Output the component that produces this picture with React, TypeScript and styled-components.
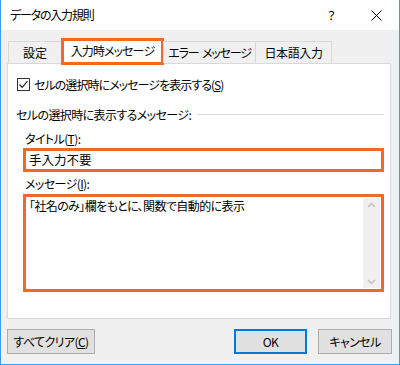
import React from "react";
import styled, { createGlobalStyle } from "styled-components";

const Global = createGlobalStyle`
  html, body { margin: 0; padding: 0; background: #ffffff; }
  body {
    font-family: "Noto Sans CJK JP", "Noto Sans", sans-serif;
    font-size: 12px;
    letter-spacing: -0.6px;
    color: #000;
    font-feature-settings: "palt";
  }
  * { box-sizing: border-box; }
`;

const Window = styled.div`
  width: 400px;
  height: 365px;
  border: 1px solid #3d9be9;
  border-top: none;
  background: #f0f0f0;
  display: flex;
  flex-direction: column;
`;

const TitleBar = styled.div`
  height: 30px;
  background: #ffffff;
  display: flex;
  align-items: center;
  padding-left: 9px;
  flex-shrink: 0;
`;

const TitleText = styled.div`
  flex: 1;
  font-size: 12px;
  letter-spacing: -1.2px;
  line-height: 1;
  padding-bottom: 1px;
`;

const TitleButton = styled.div`
  width: 45px;
  height: 30px;
  display: flex;
  align-items: center;
  justify-content: center;
  font-family: "Noto Sans", sans-serif;
  font-size: 13px;
  letter-spacing: 0;
  color: #000;
`;

const TabStrip = styled.div`
  display: flex;
  align-items: flex-end;
  height: 33px;
  padding-left: 7px;
  position: relative;
  z-index: 1;
`;

const Tab = styled.div<{ $w: number; $active?: boolean; $ls?: number }>`
  width: ${(p) => p.$w}px;
  height: ${(p) => (p.$active ? 27 : 22)}px;
  margin-left: -1px;
  margin-bottom: ${(p) => (p.$active ? -2 : 0)}px;
  display: flex;
  align-items: center;
  justify-content: center;
  background: ${(p) => (p.$active ? "#ffffff" : "#f0f0f0")};
  border: ${(p) => (p.$active ? "3px solid #ee6a2a" : "1px solid #d9d9d9")};
  border-bottom: ${(p) => (p.$active ? "3px solid #ee6a2a" : "none")};
  padding-bottom: ${(p) => (p.$active ? 2 : 1)}px;
  letter-spacing: ${(p) => (p.$ls !== undefined ? p.$ls : -0.6)}px;
  word-spacing: 2px;
  white-space: pre;
  &:first-child { margin-left: 0; }
`;

const Panel = styled.div`
  margin: 0 8px 0 6px;
  height: 256px;
  background: #ffffff;
  border: 1px solid #d9d9d9;
  display: flex;
  flex-direction: column;
  padding: 14px 6px 0 9px;
`;

const CheckRow = styled.div`
  display: flex;
  align-items: center;
  gap: 4px;
  height: 12px;
  letter-spacing: -0.95px;
`;

const CheckBox = styled.div`
  width: 13px;
  height: 13px;
  border: 1px solid #333333;
  background: #fff;
  display: flex;
  align-items: center;
  justify-content: center;
  flex-shrink: 0;
`;

const GroupRow = styled.div`
  display: flex;
  align-items: center;
  margin-top: 17px;
  margin-left: -1px;
  height: 14px;
`;

const GroupLine = styled.div`
  flex: 1;
  height: 1px;
  background: #dcdcdc;
  margin-left: 6px;
`;

const FieldLabel = styled.div<{ $mt: number }>`
  margin-top: ${(p) => p.$mt}px;
  margin-left: 8px;
  height: 14px;
  line-height: 14px;
`;

const InputBox = styled.div`
  margin-top: 2px;
  margin-left: 6px;
  height: 24px;
  width: 361px;
  border: 3px solid #ee6a2a;
  display: flex;
  align-items: center;
  padding-left: 3px;
  padding-bottom: 1px;
  font-size: 12.5px;
  letter-spacing: 0;
`;

const MessageBox = styled.div`
  margin-top: 3px;
  margin-left: 6px;
  height: 98px;
  width: 361px;
  border: 3px solid #ee6a2a;
  display: flex;
  padding: 1px;
`;

const MessageText = styled.div`
  flex: 1;
  padding: 0 0 0 2px;
  line-height: 16px;
  font-size: 12px;
  letter-spacing: -0.6px;
`;

const ScrollBar = styled.div`
  width: 17px;
  background: #f0f0f0;
  display: flex;
  flex-direction: column;
  justify-content: space-between;
  align-items: center;
  padding: 4px 0 3px;
`;

const Footer = styled.div`
  display: flex;
  align-items: center;
  margin-top: 10px;
  padding: 0 7px 0 6px;
`;

const Button = styled.div<{ $w: number; $primary?: boolean }>`
  width: ${(p) => p.$w}px;
  height: 25px;
  background: #e1e1e1;
  border: ${(p) => (p.$primary ? "2px solid #0078d7" : "1px solid #adadad")};
  display: flex;
  align-items: center;
  justify-content: center;
  padding-bottom: 1px;
  white-space: nowrap;
`;

const Spacer = styled.div`
  flex: 1;
`;

const ButtonGap = styled.div`
  width: 11px;
`;

const Chevron = ({ up }: { up?: boolean }) => (
  <svg width="9" height="6" viewBox="0 0 9 6">
    <path
      d={up ? "M1 5 L4.5 1.5 L8 5" : "M1 1 L4.5 4.5 L8 1"}
      fill="none"
      stroke="#c4c4c4"
      strokeWidth="1.6"
    />
  </svg>
);

export default function App() {
  return (
    <>
      <Global />
      <Window>
        <TitleBar>
          <TitleText>データの入力規則</TitleText>
          <TitleButton>?</TitleButton>
          <TitleButton>
            <svg width="11" height="11" viewBox="0 0 11 11">
              <path d="M0.5 0.5 L10.5 10.5 M10.5 0.5 L0.5 10.5" stroke="#000" strokeWidth="1" />
            </svg>
          </TitleButton>
        </TitleBar>
        <TabStrip>
          <Tab $w={54} $ls={0}>設定</Tab>
          <Tab $w={103} $active $ls={-0.9}>入力時メッセージ</Tab>
          <Tab $w={93} $ls={-1.2}>エラー メッセージ</Tab>
          <Tab $w={77} $ls={-0.4}>日本語入力</Tab>
        </TabStrip>
        <Panel>
          <CheckRow>
            <CheckBox>
              <svg width="11" height="11" viewBox="0 0 11 11">
                <path d="M1.5 5.5 L4.2 8.3 L9.5 2.2" fill="none" stroke="#222" strokeWidth="1.2" />
              </svg>
            </CheckBox>
            <span>
              セルの選択時にメッセージを表示する(<u>S</u>)
            </span>
          </CheckRow>
          <GroupRow>
            <span>セルの選択時に表示するメッセージ:</span>
            <GroupLine />
          </GroupRow>
          <FieldLabel $mt={11}>
            タイトル(<u>T</u>):
          </FieldLabel>
          <InputBox>手入力不要</InputBox>
          <FieldLabel $mt={5}>
            メッセージ(<u>I</u>):
          </FieldLabel>
          <MessageBox>
            <MessageText>「社名のみ」欄をもとに、関数で自動的に表示</MessageText>
            <ScrollBar>
              <Chevron up />
              <Chevron />
            </ScrollBar>
          </MessageBox>
        </Panel>
        <Footer>
          <Button $w={88}>
            すべてクリア(<u>C</u>)
          </Button>
          <Spacer />
          <Button $w={73} $primary>
            OK
          </Button>
          <ButtonGap />
          <Button $w={74}>キャンセル</Button>
        </Footer>
      </Window>
    </>
  );
}
